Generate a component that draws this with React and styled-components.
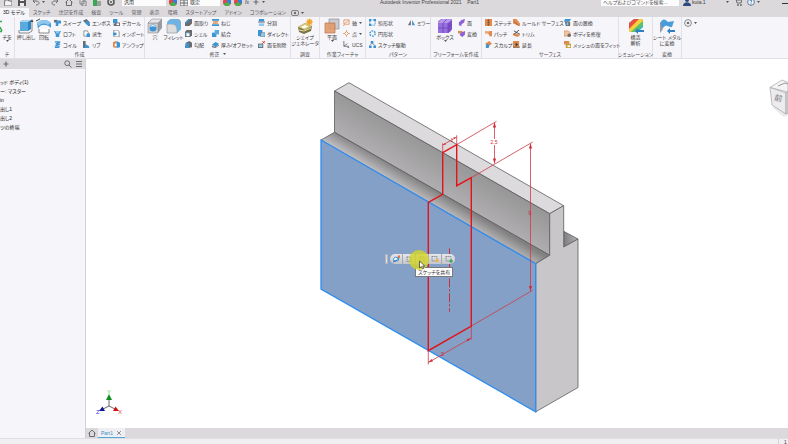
import React, { useState } from 'react';
import styled, { createGlobalStyle } from 'styled-components';

const GlobalStyle = createGlobalStyle`
  * {
    box-sizing: border-box;
  }
  html, body, #root {
    height: 100%;
  }
  body {
    margin: 0;
    overflow: hidden;
    background: #fff;
  }
  body, button, select, input {
    font-family: "Liberation Sans", "Noto Sans CJK JP", sans-serif;
    font-size: 5px;
    line-height: 6px;
    color: #3c3b3e;
    font-feature-settings: "palt";
  }
  button {
    border: none;
    background: none;
    padding: 0;
    margin: 0;
    cursor: pointer;
    white-space: nowrap;
  }
`;

const Window = styled.div`
  display: flex;
  flex-direction: column;
  height: 100%;
`;

const TitleBar = styled.header`
  display: flex;
  align-items: center;
  flex: none;
  height: 12px;
  margin-top: -4px;
  background: #dbd9dc;
`;

const QuickAccess = styled.div`
  display: flex;
  align-items: center;
  gap: 6px;
  width: 122px;
  padding-left: 4px;
`;

const TitleButton = styled.button`
  display: flex;
  align-items: center;
  gap: 2px;
`;

const TitleSelect = styled.select`
  width: ${(props) => props.$w}px;
  height: 8px;
  padding: 0 2px;
  border: none;
  background: #fcfcfd;
  color: #333;
  appearance: none;
`;

const TitleGroup = styled.div`
  display: flex;
  align-items: center;
  gap: 3px;
  padding: 0 3px;
`;

const WindowTitle = styled.h1`
  flex: 1;
  margin: 0;
  padding-left: 112px;
  font-size: 5px;
  font-weight: 400;
  color: #444;
  white-space: pre;
`;

const Search = styled.input`
  width: 78px;
  height: 8px;
  padding: 0 2px;
  border: none;
  background: #fcfcfd;
  &::placeholder {
    color: #555;
    opacity: 1;
  }
`;

const Account = styled.div`
  display: flex;
  align-items: center;
  gap: 5px;
  width: 109px;
  padding-left: 4px;
`;

const AccountName = styled.button`
  display: flex;
  align-items: center;
  gap: 1px;
  width: 38px;
`;

const TabBar = styled.nav`
  display: flex;
  flex: none;
  height: 9px;
  background: #dbd9dc;
`;

const Tab = styled.button`
  padding: 0 4px 0 3px;
  margin-right: 1px;
  line-height: 9px;
  color: ${(props) => (props.$active ? '#222' : '#5a585c')};
  background: ${(props) => (props.$active ? '#f6f5f9' : 'transparent')};
`;

const TabToggle = styled.button`
  display: flex;
  align-items: center;
  gap: 2px;
`;

const RibbonBar = styled.div`
  display: flex;
  flex: none;
  height: 42px;
  background: #f6f5f9;
  border-bottom: 1px solid #e2e0e4;
`;

const Group = styled.section`
  display: flex;
  flex-direction: column;
  flex: none;
  width: ${(props) => props.$w}px;
  border-right: 1px solid #e2e0e5;
`;

const GroupBody = styled.div`
  display: flex;
  height: 33px;
  padding-left: ${(props) => (props.$center ? 0 : 2)}px;
  justify-content: ${(props) => (props.$center ? 'center' : 'flex-start')};
`;

const GroupLabel = styled.div`
  display: flex;
  align-items: center;
  justify-content: center;
  gap: 3px;
  height: 8px;
  line-height: 8px;
  color: #4a494c;
  white-space: nowrap;
`;

const LargeButton = styled.button`
  display: flex;
  flex-direction: column;
  align-items: center;
  flex: none;
  width: ${(props) => props.$w}px;
  padding-top: 1px;
  text-align: center;
`;

const Column = styled.div`
  flex: none;
  width: ${(props) => (props.$w ? props.$w + 'px' : 'auto')};
  padding-left: 1px;
`;

const SmallButton = styled.button`
  display: flex;
  align-items: center;
  gap: 2px;
  height: 11px;
`;

const PanelMenu = styled.button`
  display: flex;
  align-items: center;
  gap: 2px;
  height: 12px;
  margin-left: 2px;
`;

const Body = styled.div`
  display: flex;
  flex: 1;
  min-height: 0;
`;

const Sidebar = styled.aside`
  flex: none;
  width: 86px;
  background: #f6f5f9;
  border-right: 1px solid #d3d1d5;
`;

const SidebarHeader = styled.div`
  display: flex;
  align-items: center;
  gap: 3px;
  height: 10px;
  padding: 0 2px;
  background: #dbd9dc;
`;

const Spacer = styled.span`
  flex: 1;
`;

const Tree = styled.ul`
  list-style: none;
  margin: 0;
  padding: 9px 0 0;
`;

const TreeItem = styled.li`
  height: 9px;
  line-height: 9px;
  color: #222;
`;

const Main = styled.main`
  display: flex;
  flex-direction: column;
  flex: 1;
  min-width: 0;
`;

const Viewport = styled.div`
  position: relative;
  flex: 1;
  min-height: 0;
  background: #fff;
`;

const Scene = styled.svg`
  display: block;
  width: 100%;
  height: 100%;
`;

const ViewCube = styled.svg`
  position: absolute;
  top: 16px;
  right: 0;
  width: 20px;
  height: 46px;
`;

const Triad = styled.svg`
  position: absolute;
  left: 8px;
  bottom: 10px;
  width: 32px;
  height: 30px;
`;

const MiniToolbar = styled.div`
  position: absolute;
  left: 299px;
  top: 195px;
  display: flex;
  gap: 2px;
  height: 10px;
`;

const Grip = styled.span`
  width: 3px;
  border-radius: 1px;
  background: #d5d8de;
  border: 1px solid #b4b8c0;
`;

const Pill = styled.div`
  display: flex;
  overflow: hidden;
  border-radius: 5px;
  background: linear-gradient(#e6e7ea, #c3c6cc);
`;

const PillButton = styled.button`
  display: flex;
  align-items: center;
  justify-content: center;
  width: 13px;
  border-right: 1px solid #a4a7ad;
  &:last-child {
    border-right: none;
  }
`;

const ClickHalo = styled.svg`
  position: absolute;
  left: 323px;
  top: 191px;
  width: 22px;
  height: 22px;
`;

const Tooltip = styled.div`
  position: absolute;
  left: 329px;
  top: 208px;
  padding: 1px 2px;
  border: 1px solid #77797d;
  background: #fff;
  line-height: 6px;
  color: #333;
  white-space: nowrap;
`;

const DocTabs = styled.div`
  display: flex;
  flex: none;
  height: 10px;
  background: #dbd9dc;
`;

const HomeTab = styled.button`
  display: flex;
  align-items: center;
  justify-content: center;
  width: 12px;
`;

const DocTab = styled.div`
  display: flex;
  align-items: center;
  gap: 3px;
  padding: 0 3px;
  background: #efeef2;
  border-bottom: 1px solid #52a9d8;
`;

const DocName = styled.button`
  color: #3d8fc4;
`;

const StatusBar = styled.footer`
  display: flex;
  justify-content: flex-end;
  flex: none;
  height: 6px;
  background: #f0eff2;
  border-top: 1px solid #e0dee2;
`;

const StatusCount = styled.span`
  width: 10px;
  padding-left: 5px;
  border-left: 1px solid #d3d1d5;
`;

const B = '#3b94d3';
const L = '#8fc8ec';
const G = '#6c6c70';
const O = '#e08a50';
const P = '#8d62d6';

// small icons live on an 8x8 grid, large ones on 16x16
const shapes = {
  sweep: <><path d="M0 1h4v3H0z" fill={G} /><path d="M2 3c3-1 3-2 6-1v3H5v3H2z" fill={B} /></>,
  loft: <><path d="M0 1h8L6 5v3H2V5z" fill={B} /><path d="M1 1h6L5 4H3z" fill={L} /></>,
  coil: <path d="M1 1h6L2 3.5h5L1 6h6M1 7.5h5" stroke={B} strokeWidth="1.3" fill="none" />,
  emboss: <><path d="M0 2l4-2 4 4-3 3z" fill={G} /><path d="M2 3l3-1 3 3v3H6z" fill={B} /></>,
  derive: <><path d="M1 1h4l1 2v4H1z" fill="#fff" stroke={G} strokeWidth=".8" /><path d="M4 4h4v4H4z" fill={B} /></>,
  rib: <><path d="M0 0h3v8H0z" fill={G} /><path d="M2 3l5 3v2H2z" fill={B} /></>,
  decal: <><path d="M0 0h5v5H0z" fill={B} /><path d="M3 4h5v4H1V6z" fill={G} /><path d="M4 5h3v2H4z" fill="#fff" /></>,
  import: <><path d="M1 0h4l2 2v6H1z" fill="#fff" stroke={G} strokeWidth=".8" /><path d="M0 3h4v3H0z" fill={B} /></>,
  unwrap: <><path d="M0 1l4-1v8l-4-1z" fill={O} /><path d="M4 0l4 2v5L4 8z" fill={B} /><path d="M2 3h2v3H2z" fill="#fff" /></>,
  chamfer: <><path d="M0 4l4-4h4v5L5 8H0z" fill={G} /><path d="M0 4l4-4h2L2 5z" fill={B} /></>,
  shell: <><path d="M0 2l2-2h6v6L6 8H0z" fill={G} /><path d="M1 3h4v4H1z" fill={L} /><path d="M2 4h3v3H2z" fill="#fff" /></>,
  draft: <><path d="M1 2l4-2 3 2v5L4 8H0z" fill={G} /><path d="M1 2l4 1-1 5H0z" fill={B} /></>,
  thread: <><path d="M0 0h8v2H0zM0 6h8v2H0z" fill={B} /><path d="M1 3h6L1 5h6" stroke={O} fill="none" /></>,
  combine: <><path d="M0 3h5v5H0z" fill={B} /><path d="M3 0h5v5H3z" fill="#5aa9df" /></>,
  thicken: <><path d="M0 4l4-3 4 2-4 4z" fill={B} /><path d="M0 5l4 2 4-3v1L4 8 0 7z" fill={G} /></>,
  split: <><path d="M1 0h6v3H1z" fill={B} /><path d="M0 3.5h8" stroke={G} /><path d="M1 5h6v3H1z" fill={L} /></>,
  direct: <><path d="M0 0h5v7H0z" fill={B} /><path d="M3 3h5v5H3z" fill={L} stroke={G} strokeWidth=".6" /></>,
  removeFace: <><path d="M0 3h6v5H0z" fill={G} /><path d="M1 4h4v3H1z" fill={L} /><path d="M5 0l3 3M8 0L5 3" stroke="#d43b34" /></>,
  axis: <path d="M1 1h6v5H3L0 8M1 1v5l5-4" stroke={O} strokeWidth=".9" fill="none" />,
  point: <><path d="M4 0v8M0 4h8" stroke={O} strokeWidth=".8" /><path d="M4 1.7L6.3 4 4 6.3 1.7 4z" fill="#fff" stroke={O} /></>,
  ucs: <path d="M1 0v6h6M1 6l4-3M5 7.5h2" stroke={G} fill="none" />,
  rect: <><path d="M1 1h6v6H1z" fill="none" stroke={B} strokeDasharray="2 1" /><path d="M0 0h2.5v2.5H0zM5.5 0H8v2.5H5.5zM0 5.5h2.5V8H0z" fill={B} /></>,
  circle: <circle cx="4" cy="4" r="3" fill="none" stroke={B} strokeWidth="1.6" strokeDasharray="2 1.14" />,
  sketchDriven: <><path d="M2 0h3v3H2zM0 5h3v3H0zM5 5h3v3H5z" fill={B} /><path d="M3 3L1 5M4 3l3 2" stroke={G} strokeWidth=".7" /></>,
  mirror: <><path d="M3.3 1v6H0z" fill={G} /><path d="M4.7 1v6H8z" fill={B} /></>,
  face: <path d="M1 4l3-3 4-1-1 4-3 2v2L1 7z" fill={P} />,
  convert: <><path d="M0 1h5v3H0z" fill={O} /><path d="M3 3l5-2v4L5 8 2 6z" fill={P} /></>,
  stitch: <><path d="M0 0h8v8H0z" fill={O} /><path d="M4 0v8M2.5 2h3M2.5 4h3M2.5 6h3" stroke="#7b4a2c" strokeWidth=".7" /></>,
  patch: <><path d="M0 1h8v6H5c0-3-2-3-5-3z" fill={O} /><path d="M0 1h6l-2 2H0z" fill="#eeb086" /></>,
  sculpt: <><path d="M0 3l5-3 3 3-4 3z" fill={O} /><path d="M1 4c3-2 5 1 3 4H1z" fill={B} /></>,
  ruled: <><path d="M0 0h4l4 5v3C5 8 2 5 0 5z" fill={O} /><path d="M1 3l5 4" stroke="#7b4a2c" strokeWidth=".6" /></>,
  trim: <><path d="M0 4h4l4 2-3 2-5-2z" fill={O} /><path d="M1 1l7 4M1 5l6-5" stroke="#333" strokeWidth=".9" /></>,
  extend: <><path d="M0 0h7v8H0z" fill={O} /><path d="M3 2l3 2-3 2z" fill="#333" /><path d="M0 7h8" stroke={G} /></>,
  replace: <><path d="M1 0h7L6 3H0z" fill={B} /><path d="M1 3h6v5H2z" fill={G} /><path d="M3 4h2v3H3z" fill={L} /></>,
  repair: <><path d="M0 1h5l2 2v4H0z" fill="#efc3a4" stroke={O} strokeWidth=".7" /><circle cx="6" cy="6" r="2" fill={G} /></>,
  meshFit: <><path d="M0 0h6v4H0z" fill={O} /><path d="M2 3h6v5H2z" fill="#c5a33a" /><path d="M4 5h3v2H4z" fill="#fff" /></>,
  folder: <path d="M1 2h3l1 1h3v5H0z" fill="#f3f2f4" stroke={G} />,
  save: <><path d="M0 0h8v8H0z" fill="#555" /><path d="M2 0h4v3H2zM2 5h4v3H2z" fill="#eee" /></>,
  undo: <path d="M1 3h3c4 0 4 4 0 4M3 1L1 3l2 2" fill="none" stroke={G} />,
  redo: <path d="M7 3H4C0 3 0 7 4 7M5 1l2 2-2 2" fill="none" stroke={G} />,
  home: <path d="M.5 4.5L4 1l3.5 3.5M1.5 4v3.5h5V4" fill="none" stroke={G} />,
  copy: <path d="M1 1h4v5H1zM3 3h4v5H3z" fill="#e6e5e8" stroke={G} strokeWidth=".8" />,
  swatch: <><path d="M0 0h4v8H0z" fill="#3aa657" /><path d="M4 3h4v5H4z" fill="#9aa09c" /></>,
  gear: <><circle cx="4" cy="4" r="3" fill="#ddd" stroke="#555" strokeWidth="1.5" /><circle cx="4" cy="4" r="1" fill="#555" /></>,
  wheel: <><circle cx="4" cy="4" r="4" fill="#e5453c" /><path d="M4 4V0a4 4 0 0 1 3.5 6z" fill="#2d7fe0" /><path d="M4 4l3.5 2A4 4 0 0 1 .5 6z" fill="#42b34f" /></>,
  grid: <path d="M0 2h8v6H0zM0 5h8M4 2v6" fill="#eee" stroke={G} />,
  user: <><circle cx="4" cy="2" r="2" fill="#2b4a80" /><path d="M0 8c0-5 8-5 8 0z" fill="#2b4a80" /></>,
  cart: <><path d="M0 1h2l1 4h4l1-3H2" fill="none" stroke={G} /><circle cx="4" cy="7" r="1" fill={G} /><circle cx="7" cy="7" r="1" fill={G} /></>,
  help: <><circle cx="4" cy="4" r="3.4" fill="#eef4fa" stroke="#657d99" /><path d="M3 3c0-1.5 2.5-1 1.5.5L4 4.5M4 5.5v1" fill="none" stroke="#2e6fae" /></>,
  search: <path d="M5 5l2.5 2.5M5.6 3.2a2.4 2.4 0 1 1-4.8 0 2.4 2.4 0 1 1 4.8 0z" fill="none" stroke={G} />,
  menu: <path d="M1 1.5h6M1 4h6M1 6.5h6" stroke={G} strokeWidth="1.2" />,
  plus: <path d="M4 1.5v5M1.5 4h5" stroke={G} strokeWidth="1.2" />,
  close: <path d="M1.5 1.5l5 5M6.5 1.5l-5 5" stroke={G} />,
  target: <><circle cx="4" cy="4" r="3.4" fill="none" stroke={G} strokeWidth=".8" /><circle cx="4" cy="4" r="1.3" fill={G} /></>,
  minimize: <path d="M2 5.5h6" stroke="#333" />,
  camera: <><rect x=".5" y="1.5" width="7" height="5" rx="1.5" fill="none" stroke={G} strokeWidth=".8" /><circle cx="4" cy="4" r="1.2" fill={G} /></>,
  editSketch: <><path d="M1 5l2-3 4 1-1 3z" fill="#fff" stroke={B} /><path d="M1 7l3-1 3-4" stroke="#3b6fa8" fill="none" /><circle cx="7" cy="1.5" r="1.2" fill="#ee6a38" /></>,
  sketchBox: <path d="M2 1.5v5h5M2 2h4v4" fill="none" stroke="#747b86" strokeWidth=".8" strokeDasharray="1.5 .6" />,
  sketchStar: <><path d="M1 1v5h4M1 1.5h5v3" fill="none" stroke="#747b86" strokeWidth=".8" strokeDasharray="1.5 .6" /><circle cx="6.2" cy="5.5" r="1.6" fill="#f0b33a" /></>,
  sketchPlus: <><path d="M1 1v5h3M1 1.5h5v2" fill="none" stroke="#747b86" strokeWidth=".8" strokeDasharray="1.5 .6" /><path d="M6 4v4M4 6h4" stroke="#23a04a" strokeWidth="1.2" /></>,

  extrude: <><path d="M2 4l3-2h8v9l-3 2H2z" fill="#2f84c6" /><path d="M2 4l3-2h8l-3 2z" fill="#a6d4f1" /><path d="M2 4h8v9H2z" fill="#5aaae0" /><path d="M1 12v3h10l3-2V3" fill="none" stroke={G} strokeWidth=".8" /><path d="M12.5 4L14 1l1.5 3z" fill="#444" /></>,
  revolve: <><path d="M1 5c4-4 10-4 14 0v5c-3-3-5-3-7-3s-4 0-6 4z" fill="#4a9dd8" /><path d="M1 5c4-4 10-4 14 0l-3 2c-3-2-6-2-9 1z" fill="#8ec8ee" /><path d="M3 11v4h10v-4" fill="#fff" stroke={G} strokeWidth=".8" /><path d="M0 3l4-2" stroke="#444" /></>,
  hole: <><path d="M1 5l4-4h10v9l-4 5H1z" fill="#9c9ca0" /><path d="M1 5h10v10H1z" fill="#d2d2d5" stroke="#8e8e92" strokeWidth=".6" /><path d="M1 5l4-4h10l-4 4z" fill="#e5e5e8" stroke="#8e8e92" strokeWidth=".6" /><circle cx="6" cy="10" r="3.5" fill="#3b94d3" /><path d="M3 9c2-3 5-2 6 0-2-1-4-1-6 0z" fill="#fff" /></>,
  fillet: <><path d="M1 6c0-3 3-5 6-5h4c3 0 4 2 4 4v6l-4 4H1z" fill="#9c9ca0" /><path d="M1 6h5c3 0 5 2 5 5v4H1z" fill="#dcdcdf" stroke="#8e8e92" strokeWidth=".6" /><path d="M1 6c0-3 3-5 5-5h4c3 0 5 3 5 6v4l-4 4v-4c0-3-2-5-5-5z" fill="#6db4e4" /></>,
  shape: <><path d="M1 9l7-4 7 3-1 5-7 3-5-2z" fill="#7c7444" /><path d="M1 9l7-4 7 3-7 4z" fill="#d6c97c" /><path d="M4 9l4-2 3 1.5-4 2z" fill="#fff" /><path d="M2 12l5 1 7-3" fill="none" stroke="#e9dfa4" /><path d="M12.5 0l1 2 2-1-1 2 2 1-2 1 1 2-2-1-1 2-1-2-2 1 1-2-2-1 2-1-1-2 2 1z" fill="#f3a32e" /></>,
  plane: <><path d="M5 1h10v10H5z" fill="#c9cbd0" stroke="#8e8e92" strokeWidth=".7" /><path d="M1 5h10v10H1z" fill="#e39a6b" stroke="#b6693c" strokeWidth=".7" opacity=".9" /></>,
  box: <><path d="M1 4c0-1 3-3 4-3h9c1 0 1 1 1 2v8c0 1-3 4-4 4H2c-1 0-1-1-1-2z" fill="#7d4fc8" /><path d="M1 4l4-3h9l1 1-4 3H1z" fill="#b796ec" /><path d="M1 5h10v10H2c-1 0-1-1-1-2z" fill="#9670dd" /><path d="M6 5v10M1 10h10l4-4M11 5v10M6 5l4-4" stroke="#6a3db8" strokeWidth=".7" fill="none" /></>,
  stress: <><path d="M1 5l5-4h9v8l-5 5H1z" fill="#35b6c4" /><path d="M1 5l5-4h5L1 13z" fill="#e9503e" /><path d="M11 1L1 11v3h2L15 3V1z" fill="#f5cf3d" /><path d="M15 3L3 14h4l8-7z" fill="#5cc463" /><path d="M8 12h8v2H8z" fill="#2f7fc4" /><path d="M10 10v6l-3-3z" fill="#2f7fc4" /></>,
  sheetMetal: <><path d="M1 5c3-5 5-4 8-1l6-1-2 6c-3 1-5-3-8 0l-4 3z" fill="#4a9dd8" /><path d="M1 5v10l3-4z" fill="#9c9ca0" /><path d="M9 12h7v2H9z" fill="#2f7fc4" /><path d="M11 10v6l-3-3z" fill="#2f7fc4" /></>,
  sketch: <path d="M0 3.5h3M1 9l2 4M0 13.5h3" fill="none" stroke="#35a853" strokeWidth="1.5" />,
};

const Icon = ({ name, size = 8 }) => (
  <svg width={size} height={size} viewBox={size > 12 ? '0 0 16 16' : '0 0 8 8'} aria-hidden="true">
    {shapes[name]}
  </svg>
);

const Caret = () => (
  <svg width="3" height="2" viewBox="0 0 3 2" aria-hidden="true">
    <path d="M0 0h3L1.5 2z" fill="#555" />
  </svg>
);

const tabs = ['3D モデル', 'スケッチ', '注記を作成', '検査', 'ツール', '管理', '表示', '環境', 'スタートアップ', 'アドイン', 'コラボレーション'];

const groups = [
  { label: 'チ', w: 15, center: true, large: [['sketch', ['チを'], 14, true]], columns: [] },
  { label: '作成', w: 130, large: [['extrude', ['押し出し'], 18], ['revolve', ['回転'], 18]],
    columns: [
      { w: 29, items: [['sweep', 'スイープ'], ['loft', 'ロフト'], ['coil', 'コイル']] },
      { w: 30, items: [['emboss', 'エンボス'], ['derive', '派生'], ['rib', 'リブ']] },
      { items: [['decal', 'デカール'], ['import', 'インポート'], ['unwrap', 'アンラップ']] },
    ] },
  { label: '修正', caret: true, w: 146, large: [['hole', ['穴'], 16], ['fillet', ['フィレット'], 21]],
    columns: [
      { w: 27, items: [['chamfer', '面取り'], ['shell', 'シェル'], ['draft', '勾配']] },
      { w: 46, items: [['thread', 'ねじ'], ['combine', '結合'], ['thicken', '厚み/オフセット']] },
      { items: [['split', '分割'], ['direct', 'ダイレクト'], ['removeFace', '面を削除']] },
    ] },
  { label: '調査', w: 29, center: true, large: [['shape', ['シェイプ', 'ジェネレータ'], 28]], columns: [] },
  { label: '作業フィーチャ', w: 46, large: [['plane', ['平面'], 20, true]],
    columns: [{ items: [['axis', '軸', true], ['point', '点', true], ['ucs', 'UCS']] }] },
  { label: 'パターン', w: 65, large: [],
    columns: [
      { w: 39, items: [['rect', '矩形状'], ['circle', '円形状'], ['sketchDriven', 'スケッチ駆動']] },
      { items: [['mirror', 'ミラー']] },
    ] },
  { label: 'フリーフォームを作成', w: 51, large: [['box', ['ボックス'], 24, true]],
    columns: [{ items: [['face', '面'], ['convert', '変換']] }] },
  { label: 'サーフェス', w: 137, large: [],
    columns: [
      { w: 28, items: [['stitch', 'ステッチ'], ['patch', 'パッチ'], ['sculpt', 'スカルプ']] },
      { w: 51, items: [['ruled', 'ルールド サーフェス'], ['trim', 'トリム'], ['extend', '延長']] },
      { items: [['replace', '面の置換'], ['repair', 'ボディを修復'], ['meshFit', 'メッシュの面をフィット']] },
    ] },
  { label: 'シミュレーション', w: 34, center: true, large: [['stress', ['構造', '解析'], 30]], columns: [] },
  { label: '変換', w: 29, center: true, large: [['sheetMetal', ['シート メタル', 'に変換'], 28]], columns: [] },
];

const treeItems = ['ッド ボディ(1)', 'ー: マスター', 'in', '出し1', '出し2', 'ツの終端'];

const RibbonGroup = ({ group }) => (
  <Group $w={group.w}>
    <GroupBody $center={group.center}>
      {group.large.map(([icon, lines, w, caret]) => (
        <LargeButton key={icon} $w={w}>
          <Icon name={icon} size={16} />
          {lines.map((line) => <span key={line}>{line}</span>)}
          {caret && <Caret />}
        </LargeButton>
      ))}
      {group.columns.map((column, index) => (
        <Column key={index} $w={column.w}>
          {column.items.map(([icon, label, caret]) => (
            <SmallButton key={label}>
              <Icon name={icon} size={7} />
              {label}
              {caret && <Caret />}
            </SmallButton>
          ))}
        </Column>
      ))}
    </GroupBody>
    <GroupLabel>{group.label}{group.caret && <Caret />}</GroupLabel>
  </Group>
);

const Model = () => (
  <Scene viewBox="86 59 702 369" role="img" aria-label="Part1">
    <defs>
      <linearGradient id="wall" gradientUnits="userSpaceOnUse" x1="420" y1="138" x2="399" y2="174">
        <stop offset="0" stopColor="#979697" />
        <stop offset="1" stopColor="#b3b1b3" />
      </linearGradient>
      <linearGradient id="ledge" gradientUnits="userSpaceOnUse" x1="440" y1="193" x2="431" y2="208">
        <stop offset="0" stopColor="#828182" />
        <stop offset="1" stopColor="#cbc9cb" />
      </linearGradient>
      <linearGradient id="notch" x1="0" y1="0" x2="1" y2="0">
        <stop offset="0" stopColor="#7c7b7d" />
        <stop offset="1" stopColor="#b5b3b5" />
      </linearGradient>
    </defs>
    <g stroke="#5d5c5e" strokeWidth=".8" strokeLinejoin="round">
      <path d="M334.5 91L349 82.7 563.7 205.7 549.7 213.7z" fill="#dcdadd" />
      <path d="M334.5 91L549.7 213.7V255.3L334.5 132.3z" fill="url(#wall)" />
      <path d="M321 140L334.5 132.3 549.7 255.3 535.7 263.7z" fill="url(#ledge)" />
      <path d="M563.7 231.3L578 239 563.7 247z" fill="url(#notch)" />
      <path d="M535.7 263.7L549.7 255.3V213.7L563.7 205.7V247L578 239V387.5L535.7 411.8z" fill="#c8c6c9" />
    </g>
    <path d="M321 140L535.7 263.7V411.8L321 289z" fill="#84a0c6" stroke="#2f8df0" strokeWidth="1.3" />
    <g fill="none" stroke="#d13a48" strokeWidth=".8">
      <path d="M442.7 152.7V143.3M456.7 144.7V135.3M442.7 145L456.7 137" />
      <path d="M456.7 144.7L496.5 121.3M494.5 122.5V163.5" />
      <path d="M471.3 177.7L532.7 142M530.5 143.5V291M471.3 326L532.7 290.3" />
      <path d="M428.3 350.7V364.5M471.3 326V339.5M428.3 362.5L471.3 338" />
      <path d="M449.5 248.3V311.7" stroke="#c92f3c" strokeWidth="1" strokeDasharray="9 2 2 2" />
    </g>
    <g fill="#d22b36">
      <path d="M494.5 122.5l1.6 5h-3.2zM494.5 163.5l1.6-5h-3.2zM530.5 143.5l1.6 5h-3.2zM530.5 291l1.6-5h-3.2z" />
      <path d="M428.3 362.5l3.5-3.5 1.3 2.3zM471.3 338l-3.5 3.5-1.3-2.3z" />
      <path d="M442.7 145l2.5-2 .8 1.5zM456.7 137l-2.5 2-.8-1.5z" />
    </g>
    <path
      d="M442.7 152.7L456.7 144.7V185.7L471.3 177.7V326L428.3 350.7V202.3L442.7 194.3z"
      fill="none" stroke="#e3131c" strokeWidth="1.4"
    />
    <g fill="#d22b36" fontSize="6" textAnchor="middle">
      <rect x="490" y="139" width="9" height="6" fill="#fff" />
      <text x="494" y="144" fontSize="5">2.5</text>
      <text x="530" y="215">9</text>
      <text x="452" y="142" fontSize="5">1</text>
      <text x="442.5" y="356">3</text>
    </g>
  </Scene>
);

const App = () => {

  const [activeTab, setActiveTab] = useState('3D モデル');

  return (
    <>
      <GlobalStyle />
      <Window>
        <TitleBar>
          <QuickAccess>
            <TitleButton aria-label="開く"><Icon name="folder" /></TitleButton>
            <TitleButton aria-label="保存"><Icon name="save" /></TitleButton>
            <TitleButton aria-label="元に戻す"><Icon name="undo" /><Caret /></TitleButton>
            <TitleButton aria-label="やり直し"><Icon name="redo" /></TitleButton>
            <TitleButton aria-label="ホーム"><Icon name="home" /></TitleButton>
            <TitleButton aria-label="コピー"><Icon name="copy" /></TitleButton>
            <TitleButton aria-label="材料"><Icon name="swatch" /></TitleButton>
            <TitleButton aria-label="設定"><Icon name="gear" /></TitleButton>
          </QuickAccess>
          <TitleSelect $w={44} aria-label="マテリアル"><option>汎用</option></TitleSelect>
          <TitleGroup>
            <Icon name="wheel" />
          </TitleGroup>
          <Icon name="grid" />
          <TitleSelect $w={32} aria-label="外観"><option>既定</option></TitleSelect>
          <TitleGroup>
            <TitleButton aria-label="調整"><Icon name="wheel" /></TitleButton>
            <TitleButton aria-label="クリア"><Icon name="wheel" /></TitleButton>
            <TitleButton><i>fx</i></TitleButton>
            <TitleButton aria-label="追加"><Icon name="plus" /><Caret /></TitleButton>
          </TitleGroup>
          <WindowTitle>Autodesk Inventor Professional 2021    Part1</WindowTitle>
          <Search aria-label="検索" placeholder="ヘルプおよびコマンドを検索..." />
          <Account>
            <AccountName><Icon name="user" />kuta.1</AccountName>
            <Caret />
            <TitleButton aria-label="カート"><Icon name="cart" /></TitleButton>
            <TitleButton aria-label="ヘルプ"><Icon name="help" /><Caret /></TitleButton>
            <Spacer />
            <TitleButton aria-label="最小化"><Icon name="minimize" /></TitleButton>
          </Account>
        </TitleBar>

        <TabBar>
          {tabs.map((tab) => (
            <Tab key={tab} $active={tab === activeTab} onClick={() => setActiveTab(tab)}>{tab}</Tab>
          ))}
          <TabToggle aria-label="表示切替"><Icon name="camera" /><Caret /></TabToggle>
        </TabBar>

        <RibbonBar>
          {groups.map((group) => <RibbonGroup key={group.label} group={group} />)}
          <PanelMenu aria-label="パネル"><Icon name="target" /><Caret /></PanelMenu>
        </RibbonBar>

        <Body>
          <Sidebar>
            <SidebarHeader>
              <Icon name="plus" />
              <Spacer />
              <Icon name="search" />
              <Icon name="menu" />
            </SidebarHeader>
            <Tree>
              {treeItems.map((item) => <TreeItem key={item}>{item}</TreeItem>)}
            </Tree>
          </Sidebar>
          <Main>
            <Viewport>
              <Model />
              <ViewCube viewBox="0 0 20 46" aria-hidden="true">
                <path d="M4 32l12 10 4-2V32z" fill="#e9e9eb" />
                <path d="M2 12.5L14 5l6 2.5V17z" fill="#f4f4f5" stroke="#a5a5a8" strokeWidth=".7" />
                <path d="M2 12.5L18 18v21L4 30z" fill="#ececee" stroke="#a5a5a8" strokeWidth=".7" />
                <path d="M18 18l2-1.5V38l-2 1z" fill="#d7d7da" stroke="#a5a5a8" strokeWidth=".7" />
                <path d="M10 11l7-3 3 1" fill="none" stroke="#98989b" />
                <text x="6" y="26" fontSize="8" fill="#77777b" transform="rotate(14 10 24)">前</text>
              </ViewCube>
              <Triad viewBox="0 0 32 30" aria-hidden="true">
                <path d="M15 18V9M15 18l-6 3M15 18l6 3" stroke="#666" fill="none" />
                <path d="M15 6l3 6h-6z" fill="#0f8f1b" />
                <path d="M25 23l-6 0 2.5-4.5z" fill="#d01414" />
                <path d="M5 23l6 0-2.5-4.5z" fill="#14149a" />
                <text x="13" y="6" fontSize="6" fill="#52d552">Y</text>
                <text x="24" y="26" fontSize="6" fill="#e04848">X</text>
                <text x="2" y="26" fontSize="6" fill="#3a3ad0">Z</text>
              </Triad>
              <MiniToolbar>
                <Grip />
                <Pill>
                  <PillButton aria-label="スケッチを編集"><Icon name="editSketch" /></PillButton>
                  <PillButton aria-label="フィーチャを編集"><Icon name="sketchBox" /></PillButton>
                  <PillButton aria-label="スケッチを共有"><Icon name="sketchBox" /></PillButton>
                  <PillButton aria-label="表示"><Icon name="sketchStar" /></PillButton>
                  <PillButton aria-label="新規スケッチ"><Icon name="sketchPlus" /></PillButton>
                </Pill>
              </MiniToolbar>
              <Tooltip role="tooltip">スケッチを共有</Tooltip>
              <ClickHalo viewBox="0 0 22 22" aria-hidden="true">
                <circle cx="10" cy="10" r="10" fill="#d3d428" opacity=".82" />
                <path d="M10.5 11v7l1.8-1.5 1.2 2.5 1.2-.6-1.2-2.4h2.2z" fill="#fff" stroke="#333" strokeWidth=".7" />
              </ClickHalo>
            </Viewport>
            <DocTabs>
              <HomeTab aria-label="ホーム"><Icon name="home" /></HomeTab>
              <DocTab>
                <DocName>Part1</DocName>
                <TitleButton aria-label="閉じる"><Icon name="close" size={6} /></TitleButton>
              </DocTab>
            </DocTabs>
          </Main>
        </Body>
        <StatusBar><StatusCount>1</StatusCount></StatusBar>
      </Window>
    </>
  );
}

export default App;
